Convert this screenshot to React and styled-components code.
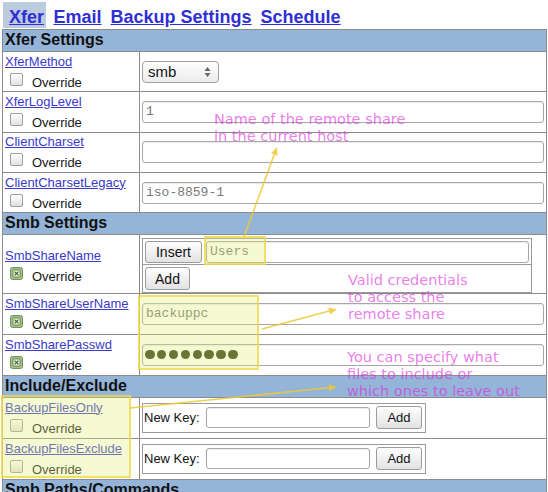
import React from "react";
import styled, { createGlobalStyle } from "styled-components";

const SANS = `"Liberation Sans", Arial, sans-serif`;
const MONO = `"Liberation Mono", "Courier New", monospace`;
const LINE = "#8c8c8c";

const GlobalStyle = createGlobalStyle`
  html, body { margin: 0; padding: 0; overflow: hidden; background: #ffffff; }
  #root { width: 548px; }
`;

const Page = styled.div`
  position: relative;
  width: 548px;
  height: 492px;
  overflow: hidden;
  font-family: ${SANS};
  color: #111;
`;

const TabBar = styled.nav`
  display: flex;
  align-items: flex-start;
  height: 29px;
  padding-left: 3px;
  box-sizing: border-box;
`;

const Tab = styled.a`
  display: block;
  margin-top: 2px;
  margin-right: ${(p) => (p.$active ? "3px" : "0")};
  padding: 5px ${(p) => (p.$active ? "2px" : "4.5px")} 0
    ${(p) => (p.$active ? "6px" : "4.5px")};
  height: 21px;
  line-height: 21px;
  background: ${(p) => (p.$active ? "#bdcbdf" : "transparent")};
  font-size: 18px;
  font-weight: bold;
  color: #2f2fd6;
  text-decoration: underline;
  white-space: nowrap;
  cursor: pointer;
`;

const Table = styled.div`
  margin-left: 2px;
  width: 545px;
  box-sizing: border-box;
  border: 1px solid ${LINE};
  border-bottom: 0;
`;

const SectionHeader = styled.div`
  box-sizing: border-box;
  height: 22px;
  padding-left: 2px;
  border-bottom: 1px solid ${LINE};
  background: #95b5d8;
  font-size: 16px;
  font-weight: bold;
  line-height: 20px;
  color: #111;
  white-space: nowrap;
`;

const Row = styled.div`
  display: grid;
  grid-template-columns: 137px 1fr;
  box-sizing: border-box;
  height: ${(p) => p.$h}px;
  border-bottom: 1px solid ${LINE};
`;

const LabelCell = styled.div`
  display: flex;
  flex-direction: column;
  justify-content: center;
  padding: ${(p) => p.$shift || 0}px 0 0 2px;
  border-right: 1px solid ${LINE};
  min-width: 0;
`;

const ConfLink = styled.a`
  display: block;
  font-size: 13px;
  line-height: 15px;
  color: #3a3acb;
  text-decoration: underline;
  white-space: nowrap;
  cursor: pointer;
`;

const OverrideLine = styled.label`
  display: flex;
  align-items: flex-start;
  height: 21px;
  font-size: 13px;
`;

const OverrideText = styled.span`
  margin: 6px 0 0 9px;
  line-height: 15px;
  color: #161616;
`;

const BoxMark = styled.span`
  display: block;
  flex: none;
  width: 13px;
  height: 13px;
  margin: 4px 0 0 5px;
  box-sizing: border-box;
  border: 1px solid #9d9d9d;
  border-radius: 2px;
  background: linear-gradient(#ffffff, #e1e1e1);
`;

const CheckedMark = styled.svg`
  display: block;
  flex: none;
  margin: 4px 0 0 5px;
`;

const ValueCell = styled.div`
  display: flex;
  align-items: ${(p) => (p.$top ? "flex-start" : "center")};
  padding: ${(p) => (p.$top ? "3px" : "0")} 2px 0 2px;
  min-width: 0;
`;

const TextInput = styled.input`
  box-sizing: border-box;
  flex: ${(p) => (p.$w ? "none" : "1 1 auto")};
  width: ${(p) => (p.$w ? `${p.$w}px` : "100%")};
  min-width: 0;
  height: ${(p) => p.$h || 22}px;
  margin: 0;
  padding: 0 3px;
  border: 1px solid #a7a7a7;
  border-radius: 3px;
  box-shadow: inset 0 1px 1px rgba(0, 0, 0, 0.08);
  background: #fff;
  font-family: ${MONO};
  font-size: 13px;
  color: #777;
  outline: none;
`;

const PasswordField = styled.div`
  box-sizing: border-box;
  width: 100%;
  height: 22px;
  display: flex;
  align-items: center;
  gap: 2.4px;
  padding-left: 2px;
  border: 1px solid #a7a7a7;
  border-radius: 3px;
  box-shadow: inset 0 1px 1px rgba(0, 0, 0, 0.08);
  background: #fff;
`;

const Dot = styled.span`
  width: 9.5px;
  height: 9.5px;
  border-radius: 50%;
  background: #2f3a12;
`;

const SelectBox = styled.div`
  box-sizing: border-box;
  width: 77px;
  height: 22px;
  display: flex;
  align-items: center;
  justify-content: space-between;
  padding: 0 7px 0 5px;
  border: 1px solid #a2a2a2;
  border-radius: 4px;
  background: linear-gradient(#ffffff, #ebebeb);
  font-size: 15px;
  color: #111;
`;

const ListBox = styled.div`
  box-sizing: border-box;
  width: 390px;
  border: 1px solid #9a9a9a;
`;

const ListRow = styled.div`
  box-sizing: border-box;
  display: flex;
  align-items: center;
  gap: 4px;
  height: ${(p) => p.$h}px;
  padding: 0 2px;
  border-bottom: ${(p) => (p.$divider ? "1px solid #9a9a9a" : "0")};
`;

const Button = styled.button`
  box-sizing: border-box;
  flex: none;
  width: ${(p) => p.$w}px;
  height: ${(p) => p.$h}px;
  margin: 0;
  padding: 0;
  border: 1px solid #9b9b9b;
  border-radius: 3px;
  background: linear-gradient(#fefefe, #e2e2e2);
  font-family: ${SANS};
  font-size: ${(p) => p.$fs || 14}px;
  color: #111;
  cursor: pointer;
`;

const KeyBox = styled.div`
  box-sizing: border-box;
  display: flex;
  align-items: center;
  width: 284px;
  height: 30px;
  padding: 0 3px 0 1px;
  border: 1px solid #9a9a9a;
`;

const KeyLabel = styled.span`
  flex: none;
  width: 62px;
  font-size: 13px;
  white-space: nowrap;
`;

const Overlay = styled.div`
  position: absolute;
  inset: 0;
  pointer-events: none;
`;

const Highlight = styled.div`
  position: absolute;
  left: ${(p) => p.$x}px;
  top: ${(p) => p.$y}px;
  width: ${(p) => p.$w}px;
  height: ${(p) => p.$h}px;
  box-sizing: border-box;
  border: 2px solid rgba(240, 214, 70, 0.75);
  background: rgba(225, 240, 120, 0.33);
`;

const Note = styled.div`
  position: absolute;
  left: ${(p) => p.$x}px;
  top: ${(p) => p.$y}px;
  font-family: "DejaVu Sans", sans-serif;
  font-size: 14.5px;
  line-height: 17px;
  color: rgba(222, 40, 222, 0.62);
  white-space: pre;
`;

const ArrowLayer = styled.svg`
  position: absolute;
  left: 0;
  top: 0;
`;

function Checkbox({ checked }) {
  if (!checked) return <BoxMark />;
  return (
    <CheckedMark width="13" height="13" viewBox="0 0 13 13">
      <rect x="0.5" y="0.5" width="12" height="12" rx="2" fill="#a2c087" stroke="#6f9456" />
      <rect x="3" y="3" width="7" height="7" rx="0.5" fill="#eef4e4" stroke="#56773d" strokeWidth="0.8" />
      <path d="M4.6 4.6 L8.4 8.4 M8.4 4.6 L4.6 8.4" stroke="#3b5a26" strokeWidth="1.1" />
    </CheckedMark>
  );
}

function Label({ name, checked, shift }) {
  return (
    <LabelCell $shift={shift}>
      <ConfLink>{name}</ConfLink>
      <OverrideLine>
        <Checkbox checked={checked} />
        <OverrideText>Override</OverrideText>
      </OverrideLine>
    </LabelCell>
  );
}

function Arrow({ x1, y1, x2, y2 }) {
  const dx = x2 - x1;
  const dy = y2 - y1;
  const len = Math.hypot(dx, dy);
  const ux = dx / len;
  const uy = dy / len;
  const bx = x2 - ux * 8;
  const by = y2 - uy * 8;
  const pts = [
    [x2, y2],
    [bx - uy * 3.5, by + ux * 3.5],
    [bx + uy * 3.5, by - ux * 3.5],
  ]
    .map((p) => p.join(","))
    .join(" ");
  return (
    <g>
      <line x1={x1} y1={y1} x2={bx} y2={by} stroke="rgba(238, 200, 50, 0.85)" strokeWidth="1.6" />
      <polygon points={pts} fill="rgba(238, 200, 50, 0.85)" />
    </g>
  );
}

function ArrowIcon() {
  return (
    <svg width="7" height="12" viewBox="0 0 7 12">
      <path d="M0.5 5 L3.5 1 L6.5 5 Z" fill="#666" />
      <path d="M0.5 7 L3.5 11 L6.5 7 Z" fill="#666" />
    </svg>
  );
}

function NewKey() {
  return (
    <KeyBox>
      <KeyLabel>New Key:</KeyLabel>
      <TextInput $w={164} $h={21} defaultValue="" />
      <Button $w={46} $h={23} $fs={13} style={{ marginLeft: 6 }}>
        Add
      </Button>
    </KeyBox>
  );
}

export default function App() {
  const tabs = ["Xfer", "Email", "Backup Settings", "Schedule"];
  return (
    <Page>
      <GlobalStyle />
      <TabBar>
        {tabs.map((t, i) => (
          <Tab key={t} $active={i === 0}>
            {t}
          </Tab>
        ))}
      </TabBar>
      <Table>
        <SectionHeader>Xfer Settings</SectionHeader>
        <Row $h={40.3}>
          <Label name="XferMethod" />
          <ValueCell>
            <SelectBox>
              <span>smb</span>
              <ArrowIcon />
            </SelectBox>
          </ValueCell>
        </Row>
        <Row $h={40.3}>
          <Label name="XferLogLevel" />
          <ValueCell>
            <TextInput defaultValue="1" />
          </ValueCell>
        </Row>
        <Row $h={40.3}>
          <Label name="ClientCharset" />
          <ValueCell>
            <TextInput defaultValue="" />
          </ValueCell>
        </Row>
        <Row $h={40.3}>
          <Label name="ClientCharsetLegacy" />
          <ValueCell>
            <TextInput defaultValue="iso-8859-1" />
          </ValueCell>
        </Row>

        <SectionHeader>Smb Settings</SectionHeader>
        <Row $h={58.5}>
          <Label name="SmbShareName" checked shift={4} />
          <ValueCell $top>
            <ListBox>
              <ListRow $h={26} $divider>
                <Button $w={57} $h={22}>
                  Insert
                </Button>
                <TextInput defaultValue="Users" />
              </ListRow>
              <ListRow $h={27}>
                <Button $w={45} $h={23}>
                  Add
                </Button>
              </ListRow>
            </ListBox>
          </ValueCell>
        </Row>
        <Row $h={41}>
          <Label name="SmbShareUserName" checked />
          <ValueCell>
            <TextInput defaultValue="backuppc" />
          </ValueCell>
        </Row>
        <Row $h={41}>
          <Label name="SmbSharePasswd" checked />
          <ValueCell>
            <PasswordField>
              {Array.from({ length: 8 }).map((_, i) => (
                <Dot key={i} />
              ))}
            </PasswordField>
          </ValueCell>
        </Row>

        <SectionHeader>Include/Exclude</SectionHeader>
        <Row $h={41}>
          <Label name="BackupFilesOnly" />
          <ValueCell>
            <NewKey />
          </ValueCell>
        </Row>
        <Row $h={41}>
          <Label name="BackupFilesExclude" />
          <ValueCell>
            <NewKey />
          </ValueCell>
        </Row>

        <SectionHeader>Smb Paths/Commands</SectionHeader>
        <Row $h={41}>
          <Label name="SmbClientFullCmd" />
          <ValueCell>
            <TextInput defaultValue="" />
          </ValueCell>
        </Row>
      </Table>

      <Overlay>
        <Highlight $x={204} $y={236} $w={62} $h={29} />
        <Highlight $x={138} $y={295} $w={121} $h={75} />
        <Highlight $x={1} $y={395} $w={130} $h={83} />
        <ArrowLayer width="548" height="492" viewBox="0 0 548 492">
          <Arrow x1={244} y1={237} x2={277} y2={147} />
          <Arrow x1={262} y1={329} x2={337} y2={309} />
          <Arrow x1={130} y1={408} x2={337} y2={387} />
        </ArrowLayer>
        <Note $x={214} $y={111}>{"Name of the remote share\nin the current host"}</Note>
        <Note $x={348} $y={272}>{"Valid credentials\nto access the\nremote share"}</Note>
        <Note $x={347} $y={348.5}>
          {"You can specify what\nfiles to include or\nwhich ones to leave out"}
        </Note>
      </Overlay>
    </Page>
  );
}
